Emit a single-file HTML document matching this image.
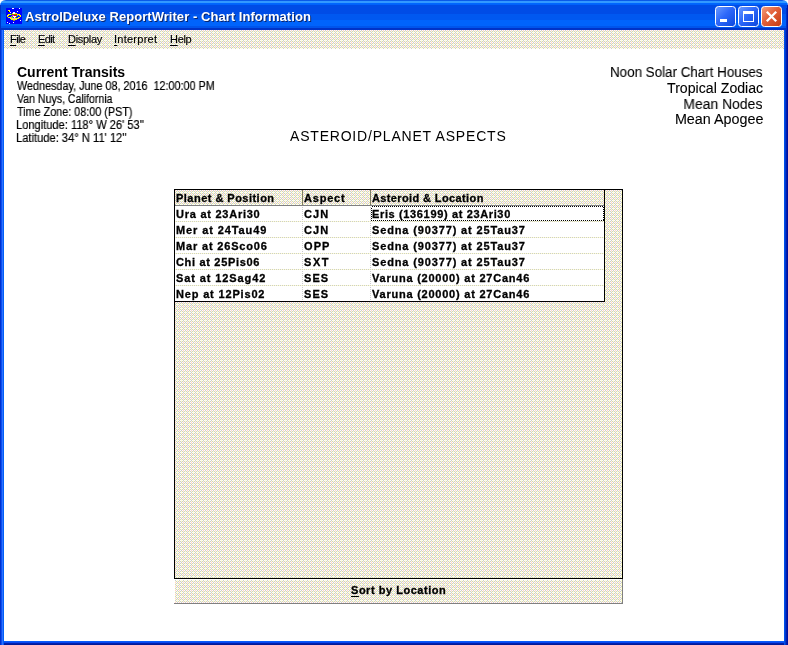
<!DOCTYPE html>
<html><head><meta charset="utf-8">
<style>
html,body{margin:0;padding:0;width:788px;height:645px;overflow:hidden;background:#fff;}
body{position:relative;font-family:"Liberation Sans",sans-serif;color:#000;}
.a{position:absolute;white-space:nowrap;line-height:1;will-change:transform;}
svg.bg{position:absolute;left:0;top:0;}
.ttl{left:25px;top:10px;letter-spacing:0.05px;font-size:13px;font-weight:bold;color:#fff;text-shadow:1px 1px 0 #0a246a;}
.menu{top:34px;font-size:11px;-webkit-text-stroke:0.15px #000;}
.u{text-decoration:underline;text-underline-offset:2px;}
.hdr{font-size:14px;font-weight:bold;}
.sm{font-size:12px;transform-origin:0 0;-webkit-text-stroke:0.2px #000;}
.rt{font-size:14px;transform-origin:100% 0;-webkit-text-stroke:0.1px #000;}
.c{font-size:11px;font-weight:bold;letter-spacing:0.6px;-webkit-text-stroke:0.3px #000;}
</style></head><body>
<svg class="bg" width="788" height="645" viewBox="0 0 788 645" shape-rendering="crispEdges">
 <defs>
  <pattern id="d" x="0" y="0" width="4" height="4" patternUnits="userSpaceOnUse">
   <rect width="4" height="4" fill="#fff"/>
   <rect x="1" y="0" width="1" height="1" fill="#ffffcc"/><rect x="3" y="0" width="1" height="1" fill="#cccccc"/>
   <rect x="0" y="1" width="1" height="1" fill="#cccccc"/><rect x="1" y="1" width="1" height="1" fill="#ffffcc"/><rect x="2" y="1" width="1" height="1" fill="#cccccc"/><rect x="3" y="1" width="1" height="1" fill="#ffffcc"/>
   <rect x="1" y="2" width="1" height="1" fill="#cccccc"/><rect x="3" y="2" width="1" height="1" fill="#ffcccc"/>
   <rect x="0" y="3" width="1" height="1" fill="#cccccc"/><rect x="1" y="3" width="1" height="1" fill="#ffffcc"/><rect x="2" y="3" width="1" height="1" fill="#cccccc"/><rect x="3" y="3" width="1" height="1" fill="#ffffcc"/>
  </pattern>
  <pattern id="hd" x="0" y="0" width="2" height="2" patternUnits="userSpaceOnUse"><rect width="2" height="2" fill="#ffffcc"/><rect width="1" height="2" fill="#cccccc"/></pattern>
  <pattern id="vd" x="0" y="0" width="2" height="2" patternUnits="userSpaceOnUse"><rect width="2" height="2" fill="#ffffff"/><rect y="1" width="2" height="1" fill="#cccccc"/></pattern>
  <linearGradient id="tg" x1="0" y1="0" x2="0" y2="30" gradientUnits="userSpaceOnUse">
   <stop offset="0" stop-color="#0a4fd8"/>
   <stop offset="0.04" stop-color="#3d95ff"/>
   <stop offset="0.10" stop-color="#2a86ff"/>
   <stop offset="0.15" stop-color="#0a60f0"/>
   <stop offset="0.25" stop-color="#0050dc"/>
   <stop offset="0.55" stop-color="#0050e0"/>
   <stop offset="0.70" stop-color="#0a64f8"/>
   <stop offset="0.85" stop-color="#0a66fa"/>
   <stop offset="0.92" stop-color="#0058ee"/>
   <stop offset="0.96" stop-color="#0038c8"/>
   <stop offset="1" stop-color="#0030b8"/>
  </linearGradient>
  <linearGradient id="bb" x1="0" y1="0" x2="1" y2="1">
   <stop offset="0" stop-color="#6c9cff"/><stop offset="0.45" stop-color="#2e68fa"/><stop offset="1" stop-color="#0a46dc"/>
  </linearGradient>
  <linearGradient id="rb" x1="0" y1="0" x2="1" y2="1">
   <stop offset="0" stop-color="#f4a080"/><stop offset="0.45" stop-color="#e2603a"/><stop offset="1" stop-color="#c43a10"/>
  </linearGradient>
 </defs>
 <!-- frame -->
 <clipPath id="tc"><path d="M0 6Q0 0 6 0H782Q788 0 788 6V645H0Z"/></clipPath>
 <g clip-path="url(#tc)">
  <rect x="0" y="0" width="788" height="1" fill="#0a5ae8"/>
  <rect x="0" y="1" width="788" height="2" fill="#3399ff"/>
  <rect x="0" y="3" width="788" height="1" fill="#0066ff"/>
  <rect x="0" y="4" width="788" height="1" fill="#0062fa"/>
  <rect x="0" y="5" width="788" height="9" fill="#004ce6"/>
  <rect x="0" y="14" width="788" height="6" fill="#0058f0"/>
  <rect x="0" y="20" width="788" height="6" fill="#0064fc"/>
  <rect x="0" y="26" width="788" height="2" fill="#0055ec"/>
  <rect x="0" y="28" width="788" height="2" fill="#0034c8"/>
  <rect x="0" y="30" width="1" height="615" fill="#0030d0"/>
  <rect x="1" y="30" width="1" height="615" fill="#0a50f0"/>
  <rect x="2" y="30" width="1" height="615" fill="#3070ff"/>
  <rect x="3" y="30" width="1" height="615" fill="#0060f8"/>
  <rect x="784" y="30" width="1" height="615" fill="#0050e8"/>
  <rect x="785" y="30" width="1" height="615" fill="#0038d0"/>
  <rect x="786" y="30" width="1" height="615" fill="#0020b0"/>
  <rect x="787" y="30" width="1" height="615" fill="#000fa0"/>
  <rect x="4" y="641" width="780" height="1" fill="#0a5cf8"/>
  <rect x="4" y="642" width="780" height="1" fill="#0848f0"/>
  <rect x="4" y="643" width="780" height="1" fill="#0020b0"/>
  <rect x="4" y="644" width="780" height="1" fill="#001a98"/>
  <rect x="0" y="5" width="1" height="25" fill="#0030c8"/>
  <rect x="787" y="5" width="1" height="25" fill="#0018a8"/>
  <rect x="786" y="8" width="1" height="22" fill="#0030c8"/>
 </g>
 <!-- menubar + client -->
 <rect x="4" y="30" width="780" height="19" fill="url(#d)"/>
 <rect x="4" y="49" width="780" height="592" fill="#fff"/>
 <!-- icon -->
 <rect x="6" y="8" width="16" height="16" fill="#0000ff"/>
 <!-- buttons -->
 <rect x="715.5" y="6.5" width="20" height="20" rx="3" fill="url(#bb)" stroke="#fff" shape-rendering="auto"/>
 <rect x="720" y="19" width="7" height="3" fill="#fff"/>
 <rect x="738.5" y="6.5" width="20" height="20" rx="3" fill="url(#bb)" stroke="#fff" shape-rendering="auto"/>
 <rect x="743" y="11" width="11" height="3" fill="#fff"/>
 <rect x="743" y="11" width="1" height="11" fill="#fff"/>
 <rect x="753" y="11" width="1" height="11" fill="#fff"/>
 <rect x="743" y="21" width="11" height="1" fill="#fff"/>
 <rect x="761.5" y="6.5" width="20" height="20" rx="3" fill="url(#rb)" stroke="#fff" shape-rendering="auto"/>
 <path d="M766.8 11.8L776.2 21.2M776.2 11.8L766.8 21.2" stroke="#fff" stroke-width="2.3" shape-rendering="auto"/>
 <!-- grid -->
 <rect x="174" y="189" width="449" height="390" fill="#000"/>
 <rect x="175" y="190" width="447" height="388" fill="url(#d)"/>
 <rect x="175" y="206" width="429" height="95" fill="#fff"/>
 <rect x="604" y="190" width="1" height="112" fill="#000"/>
 <rect x="175" y="301" width="430" height="1" fill="#000"/>
 <rect x="175" y="205" width="429" height="1" fill="#808080"/>
 <rect x="302" y="190" width="1" height="15" fill="#7d7d66"/>
 <rect x="370" y="190" width="1" height="15" fill="#7d7d66"/>
 <g fill="url(#hd)">
  <rect x="175" y="221" width="429" height="1"/>
  <rect x="175" y="237" width="429" height="1"/>
  <rect x="175" y="253" width="429" height="1"/>
  <rect x="175" y="269" width="429" height="1"/>
  <rect x="175" y="285" width="429" height="1"/>
 </g>
 <g fill="url(#vd)">
  <rect x="302" y="206" width="1" height="95"/>
  <rect x="370" y="206" width="1" height="95"/>
 </g>
 <rect x="371.5" y="206.5" width="232" height="14" fill="none" stroke="#000" stroke-dasharray="1 1"/>
 <!-- button -->
 <rect x="174" y="579" width="449" height="25" fill="url(#d)"/>
 <rect x="174" y="579" width="448" height="1" fill="#fff"/>
 <rect x="174" y="579" width="1" height="24" fill="#fff"/>
 <rect x="174" y="603" width="449" height="1" fill="#808080"/>
 <rect x="622" y="579" width="1" height="25" fill="#808080"/>
</svg>
<svg class="a" style="left:6px;top:8px" width="16" height="16" viewBox="0 0 16 16" shape-rendering="crispEdges"><rect width="16" height="16" fill="#0000ff"/><rect x="6" y="0" width="2" height="1" fill="#ffffff"/><rect x="13" y="0" width="1" height="1" fill="#ffffff"/><rect x="2" y="2" width="2" height="1" fill="#ffff00"/><rect x="2" y="3" width="1" height="1" fill="#000000"/><rect x="3" y="3" width="1" height="1" fill="#ffff00"/><rect x="11" y="3" width="1" height="1" fill="#ffffff"/><rect x="4" y="4" width="1" height="1" fill="#ffffff"/><rect x="7" y="4" width="2" height="1" fill="#ffffff"/><rect x="6" y="5" width="1" height="1" fill="#ffff00"/><rect x="7" y="5" width="2" height="1" fill="#ffffff"/><rect x="9" y="5" width="2" height="1" fill="#ffff00"/><rect x="2" y="6" width="3" height="1" fill="#ffff00"/><rect x="5" y="6" width="1" height="1" fill="#00ff00"/><rect x="6" y="6" width="1" height="1" fill="#ff0000"/><rect x="7" y="6" width="1" height="1" fill="#00ff00"/><rect x="8" y="6" width="1" height="1" fill="#ff0000"/><rect x="9" y="6" width="1" height="1" fill="#00ff00"/><rect x="10" y="6" width="1" height="1" fill="#ff0000"/><rect x="11" y="6" width="3" height="1" fill="#ffff00"/><rect x="1" y="7" width="2" height="1" fill="#ffff00"/><rect x="6" y="7" width="2" height="1" fill="#ff00ff"/><rect x="8" y="7" width="3" height="1" fill="#ff0000"/><rect x="11" y="7" width="1" height="1" fill="#00ffff"/><rect x="13" y="7" width="2" height="1" fill="#ffff00"/><rect x="1" y="8" width="1" height="1" fill="#ffff00"/><rect x="5" y="8" width="1" height="1" fill="#999999"/><rect x="6" y="8" width="1" height="1" fill="#00ff00"/><rect x="7" y="8" width="3" height="1" fill="#ffffff"/><rect x="10" y="8" width="1" height="1" fill="#00ff00"/><rect x="14" y="8" width="1" height="1" fill="#ffff00"/><rect x="2" y="9" width="3" height="1" fill="#ffff00"/><rect x="5" y="9" width="2" height="1" fill="#999999"/><rect x="7" y="9" width="1" height="1" fill="#ff0000"/><rect x="8" y="9" width="1" height="1" fill="#ffffff"/><rect x="9" y="9" width="1" height="1" fill="#999933"/><rect x="12" y="9" width="2" height="1" fill="#ffff00"/><rect x="4" y="10" width="2" height="1" fill="#ffff00"/><rect x="6" y="10" width="4" height="1" fill="#cccccc"/><rect x="10" y="10" width="3" height="1" fill="#ffff00"/><rect x="5" y="11" width="6" height="1" fill="#ffff00"/><rect x="7" y="12" width="2" height="1" fill="#999933"/><rect x="14" y="12" width="1" height="1" fill="#ffffff"/><rect x="1" y="14" width="1" height="1" fill="#ffffff"/><rect x="7" y="14" width="1" height="1" fill="#ffffff"/><rect x="3" y="15" width="1" height="1" fill="#ffffff"/></svg>
<div class="a ttl">AstrolDeluxe ReportWriter - Chart Information</div>
<div class="a menu" style="left:10px;letter-spacing:-0.6px"><span class="u">F</span>ile</div>
<div class="a menu" style="left:38px;letter-spacing:-0.6px"><span class="u">E</span>dit</div>
<div class="a menu" style="left:68px;letter-spacing:-0.3px"><span class="u">D</span>isplay</div>
<div class="a menu" style="left:114px;letter-spacing:0.25px"><span class="u">I</span>nterpret</div>
<div class="a menu" style="left:170px;letter-spacing:-0.3px"><span class="u">H</span>elp</div>

<div class="a hdr" style="left:17px;top:65px">Current Transits</div>
<div class="a sm" style="left:17px;top:80px;transform:scaleX(0.9)">Wednesday, June 08, 2016&nbsp; 12:00:00 PM</div>
<div class="a sm" style="left:17px;top:93px;transform:scaleX(0.88)">Van Nuys, California</div>
<div class="a sm" style="left:17px;top:106px;transform:scaleX(0.9)">Time Zone: 08:00 (PST)</div>
<div class="a sm" style="left:16px;top:119px;transform:scaleX(0.925)">Longitude: 118° W 26' 53''</div>
<div class="a sm" style="left:16px;top:132px;transform:scaleX(0.93)">Latitude: 34° N 11' 12''</div>

<div class="a rt" style="right:25px;top:65px;transform:scaleX(0.956)">Noon Solar Chart Houses</div>
<div class="a rt" style="right:25px;top:81px;transform:scaleX(1.01)">Tropical Zodiac</div>
<div class="a rt" style="right:26px;top:97px;transform:scaleX(0.996)">Mean Nodes</div>
<div class="a rt" style="right:25px;top:112px;transform:scaleX(1.024)">Mean Apogee</div>

<div class="a" style="left:290px;top:129px;font-size:14px;letter-spacing:0.8px">ASTEROID/PLANET ASPECTS</div>

<div class="a c" style="left:176px;top:193px;letter-spacing:0.475px">Planet &amp; Position</div>
<div class="a c" style="left:304px;top:193px;letter-spacing:0.8px">Aspect</div>
<div class="a c" style="left:372px;top:193px;letter-spacing:0.38px">Asteroid &amp; Location</div>

<div class="a c" style="left:176px;top:209px;letter-spacing:0.75px">Ura at 23Ari30</div>
<div class="a c" style="left:304px;top:209px;letter-spacing:1.1px">CJN</div>
<div class="a c" style="left:372px;top:209px;letter-spacing:0.64px">Eris (136199) at 23Ari30</div>
<div class="a c" style="left:176px;top:225px;letter-spacing:0.9px">Mer at 24Tau49</div>
<div class="a c" style="left:304px;top:225px;letter-spacing:1.1px">CJN</div>
<div class="a c" style="left:372px;top:225px;letter-spacing:0.86px">Sedna (90377) at 25Tau37</div>
<div class="a c" style="left:176px;top:241px;letter-spacing:0.83px">Mar at 26Sco06</div>
<div class="a c" style="left:304px;top:241px;letter-spacing:1.1px">OPP</div>
<div class="a c" style="left:372px;top:241px;letter-spacing:0.86px">Sedna (90377) at 25Tau37</div>
<div class="a c" style="left:176px;top:257px;letter-spacing:0.68px">Chi at 25Pis06</div>
<div class="a c" style="left:304px;top:257px;letter-spacing:1.6px">SXT</div>
<div class="a c" style="left:372px;top:257px;letter-spacing:0.86px">Sedna (90377) at 25Tau37</div>
<div class="a c" style="left:176px;top:273px;letter-spacing:0.9px">Sat at 12Sag42</div>
<div class="a c" style="left:304px;top:273px;letter-spacing:1.1px">SES</div>
<div class="a c" style="left:372px;top:273px;letter-spacing:0.77px">Varuna (20000) at 27Can46</div>
<div class="a c" style="left:176px;top:289px;letter-spacing:0.83px">Nep at 12Pis02</div>
<div class="a c" style="left:304px;top:289px;letter-spacing:1.1px">SES</div>
<div class="a c" style="left:372px;top:289px;letter-spacing:0.77px">Varuna (20000) at 27Can46</div>

<div class="a c" style="left:351px;top:585px;letter-spacing:0.53px"><span class="u">S</span>ort by Location</div>
</body></html>
